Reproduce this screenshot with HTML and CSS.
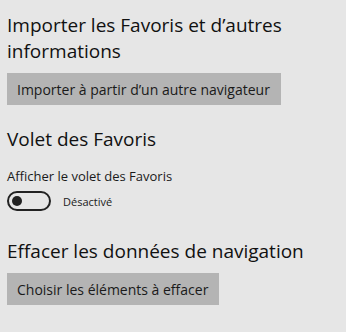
FILE: index.html
```html
<!DOCTYPE html>
<html lang="fr">
<head>
  <meta charset="UTF-8">
  <meta name="viewport" content="width=device-width, initial-scale=1.0">
  <title>Paramètres</title>
  <link rel="stylesheet" href="styles.css">
</head>
<body>
  <div class="panel">
    <section class="group">
      <h2 class="heading">Importer les Favoris et d’autres informations</h2>
      <button class="action">Importer à partir d’un autre navigateur</button>
    </section>

    <section class="group">
      <h2 class="heading">Volet des Favoris</h2>
      <div class="label">Afficher le volet des Favoris</div>
      <div class="toggle-row">
        <span class="toggle"><span class="knob"></span></span>
        <span class="state">Désactivé</span>
      </div>
    </section>

    <section class="group">
      <h2 class="heading">Effacer les données de navigation</h2>
      <button class="action">Choisir les éléments à effacer</button>
    </section>
  </div>
</body>
</html>
```

FILE: styles.css
```css
* {
  margin: 0;
  padding: 0;
  box-sizing: border-box;
}

body {
  background-color: #e6e6e6;
  font-family: "Open Sans", "Noto Sans", sans-serif;
  color: #1a1a1a;
  width: 346px;
  height: 332px;
  overflow: hidden;
}

.panel {
  padding: 12px 0 0 7px;
  width: 330px;
}

.group {
  margin-bottom: 21px;
}

.heading {
  font-size: 19px;
  font-weight: 400;
  line-height: 26px;
  color: #111;
}

.action {
  display: block;
  margin-top: 9px;
  height: 32px;
  padding: 0 11px 0 10px;
  border: none;
  background-color: #b4b4b4;
  font-family: inherit;
  font-size: 14px;
  color: #1a1a1a;
}

.label {
  margin-top: 15px;
  font-size: 13px;
  line-height: 18px;
}

.toggle-row {
  display: flex;
  align-items: center;
  margin: 6px 0 27px;
  gap: 12px;
}

.toggle {
  display: flex;
  align-items: center;
  width: 44px;
  height: 20px;
  border: 2px solid #222;
  border-radius: 10px;
  padding-left: 3px;
}

.knob {
  width: 10px;
  height: 10px;
  border-radius: 50%;
  background-color: #222;
}

.state {
  font-size: 11px;
}
```
